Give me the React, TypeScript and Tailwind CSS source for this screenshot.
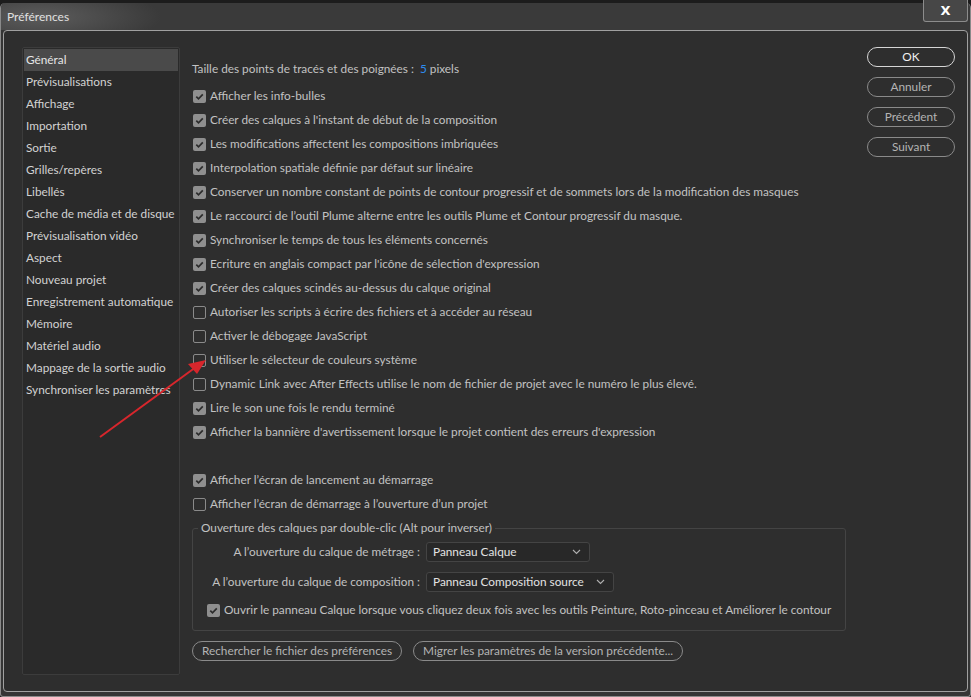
import type { ReactNode } from 'react'

const font = { fontFamily: 'Lato, "Noto Sans", sans-serif' }

const sections = [
  'Général',
  'Prévisualisations',
  'Affichage',
  'Importation',
  'Sortie',
  'Grilles/repères',
  'Libellés',
  'Cache de média et de disque',
  'Prévisualisation vidéo',
  'Aspect',
  'Nouveau projet',
  'Enregistrement automatique',
  'Mémoire',
  'Matériel audio',
  'Mappage de la sortie audio',
  'Synchroniser les paramètres',
]

const options: [string, boolean][] = [
  ['Afficher les info-bulles', true],
  ["Créer des calques à l'instant de début de la composition", true],
  ['Les modifications affectent les compositions imbriquées', true],
  ['Interpolation spatiale définie par défaut sur linéaire', true],
  ['Conserver un nombre constant de points de contour progressif et de sommets lors de la modification des masques', true],
  ['Le raccourci de l’outil Plume alterne entre les outils Plume et Contour progressif du masque.', true],
  ['Synchroniser le temps de tous les éléments concernés', true],
  ["Ecriture en anglais compact par l'icône de sélection d'expression", true],
  ['Créer des calques scindés au-dessus du calque original', true],
  ['Autoriser les scripts à écrire des fichiers et à accéder au réseau', false],
  ['Activer le débogage JavaScript', false],
  ['Utiliser le sélecteur de couleurs système', false],
  ['Dynamic Link avec After Effects utilise le nom de fichier de projet avec le numéro le plus élevé.', false],
  ['Lire le son une fois le rendu terminé', true],
  ["Afficher la bannière d'avertissement lorsque le projet contient des erreurs d'expression", true],
]

function Check({ on }: { on: boolean }) {
  if (!on) {
    return <span className="w-[13px] h-[13px] shrink-0 rounded-[2px] border-[1.5px] border-[#8a8a8a]" />
  }
  return (
    <span className="w-[13px] h-[13px] shrink-0 rounded-[2px] bg-[#8f8f8f] flex items-center justify-center">
      <svg width="11" height="11" viewBox="0 0 11 11">
        <path d="M2.3 5.6 L4.5 7.8 L8.8 3.3" fill="none" stroke="#2c2c2c" strokeWidth="1.7" />
      </svg>
    </span>
  )
}

function CheckRow({ label, on }: { label: string; on: boolean }) {
  return (
    <div className="h-6 flex items-center gap-[4px] pl-px">
      <Check on={on} />
      <span className="whitespace-nowrap">{label}</span>
    </div>
  )
}

function Pill({ children, main }: { children: ReactNode; main?: boolean }) {
  return (
    <button
      className={`h-5 rounded-full border flex items-center justify-center whitespace-nowrap ${
        main ? 'border-[#d6d6d6] text-[#f0f0f0]' : 'border-[#8a8a8a] text-[#b4b4b4]'
      }`}
    >
      {children}
    </button>
  )
}

function Select({ value, width }: { value: string; width: string }) {
  return (
    <div className={`${width} h-5 rounded-[3px] border border-[#444] bg-[#282828] flex items-center justify-between pl-[6px] pr-[8px] text-[#e2e2e2]`}>
      <span>{value}</span>
      <svg width="9" height="6" viewBox="0 0 9 6">
        <path d="M1 1 L4.5 4.5 L8 1" fill="none" stroke="#b0b0b0" strokeWidth="1.1" />
      </svg>
    </div>
  )
}

export default function App() {
  return (
    <div style={font} className="relative w-[971px] h-[697px] bg-[#1c1c1c] text-[11.8px] text-[#c2c2c2] leading-4 overflow-hidden">
      <div className="absolute inset-x-0 top-[3px] bottom-0 rounded-t-[5px] rounded-b-[3px] border border-t-0 border-[#8a8a8a] bg-[#353535] flex flex-col">
        {/* title bar */}
        <div className="h-[27px] shrink-0 flex items-center pl-[6px] bg-[radial-gradient(ellipse_120px_30px_at_40px_14px,#5c5c5c,#3a3a3a)] rounded-t-[5px]">
          <span className="text-[#e0e0e0] text-[12px]">Préférences</span>
        </div>

        {/* body */}
        <div className="mx-[2px] mb-[4px] flex-1 flex rounded-[4px] border border-[#a0a0a0] bg-[#2e2e2e] pt-[16px] pl-[18px] pr-[12px] pb-[16px]">
          {/* sidebar */}
          <div className="w-[158px] shrink-0 border border-[#3c3c3c] bg-[#2a2a2a] rounded-[2px]">
            {sections.map((s, i) => (
              <div
                key={s}
                className={`h-[22px] flex items-center whitespace-nowrap ${
                  i === 0 ? 'bg-[#4a4a4a] text-[#e6e6e6] mx-px mt-px h-[21px] pl-[2px]' : 'text-[#d2d2d2] pl-[3px]'
                }`}
              >
                {s}
              </div>
            ))}
          </div>

          {/* main */}
          <div className="ml-[12px] w-[654px] shrink-0 pt-[10px]">
            <div className="h-6 flex items-center">
              Taille des points de tracés et des poignées :&nbsp;&nbsp;<span className="text-[#2d8cf0]">5</span>&nbsp;pixels
            </div>
            <div className="mt-[3px]">
              {options.map(([l, on]) => (
                <CheckRow key={l} label={l} on={on} />
              ))}
            </div>
            <div className="mt-6">
              <CheckRow label="Afficher l’écran de lancement au démarrage" on />
              <CheckRow label="Afficher l’écran de démarrage à l’ouverture d’un projet" on={false} />
            </div>

            <fieldset className="mt-1 border border-[#444] rounded-[3px] pl-[5px] pr-2 pb-[10px]">
              <legend className="px-[3px]">Ouverture des calques par double-clic (Alt pour inverser)</legend>
              <div className="mt-[6px] grid grid-cols-[222px_auto] gap-x-[6px] gap-y-[10px] items-center justify-start">
                <span className="text-right whitespace-nowrap">A l’ouverture du calque de métrage :</span>
                <Select value="Panneau Calque" width="w-[164px]" />
                <span className="text-right whitespace-nowrap">A l’ouverture du calque de composition :</span>
                <Select value="Panneau Composition source" width="w-[188px]" />
              </div>
              <div className="mt-2 h-5 flex items-center gap-[4px] pl-[9px]">
                <Check on />
                <span className="whitespace-nowrap">
                  Ouvrir le panneau Calque lorsque vous cliquez deux fois avec les outils Peinture, Roto-pinceau et Améliorer le contour
                </span>
              </div>
            </fieldset>

            <div className="mt-[10px] flex gap-[11px]">
              <Pill>
                <span className="px-[9px]">Rechercher le fichier des préférences</span>
              </Pill>
              <Pill>
                <span className="px-[9px]">Migrer les paramètres de la version précédente...</span>
              </Pill>
            </div>
          </div>

          {/* right buttons */}
          <div className="ml-auto w-[88px] flex flex-col gap-[10px]">
            <Pill main>OK</Pill>
            <Pill>Annuler</Pill>
            <Pill>Précédent</Pill>
            <Pill>Suivant</Pill>
          </div>
        </div>
      </div>

      {/* close button */}
      <div className="absolute right-[3px] top-0 w-[45px] h-[22px] rounded-b-[3px] border border-t-0 border-[#8c8c8c] bg-[#474747] flex items-center justify-center">
        <span className="text-white font-bold text-[13px]" style={{ fontFamily: '"DejaVu Sans", sans-serif' }}>X</span>
      </div>

      {/* annotation arrow */}
      <svg className="absolute left-0 top-0 pointer-events-none" width="971" height="697">
        <line x1="100" y1="437" x2="196" y2="367" stroke="#d8262c" strokeWidth="2" />
        <path d="M206 360 L188 364 L197 374 Z" fill="#d8262c" />
      </svg>
    </div>
  )
}
